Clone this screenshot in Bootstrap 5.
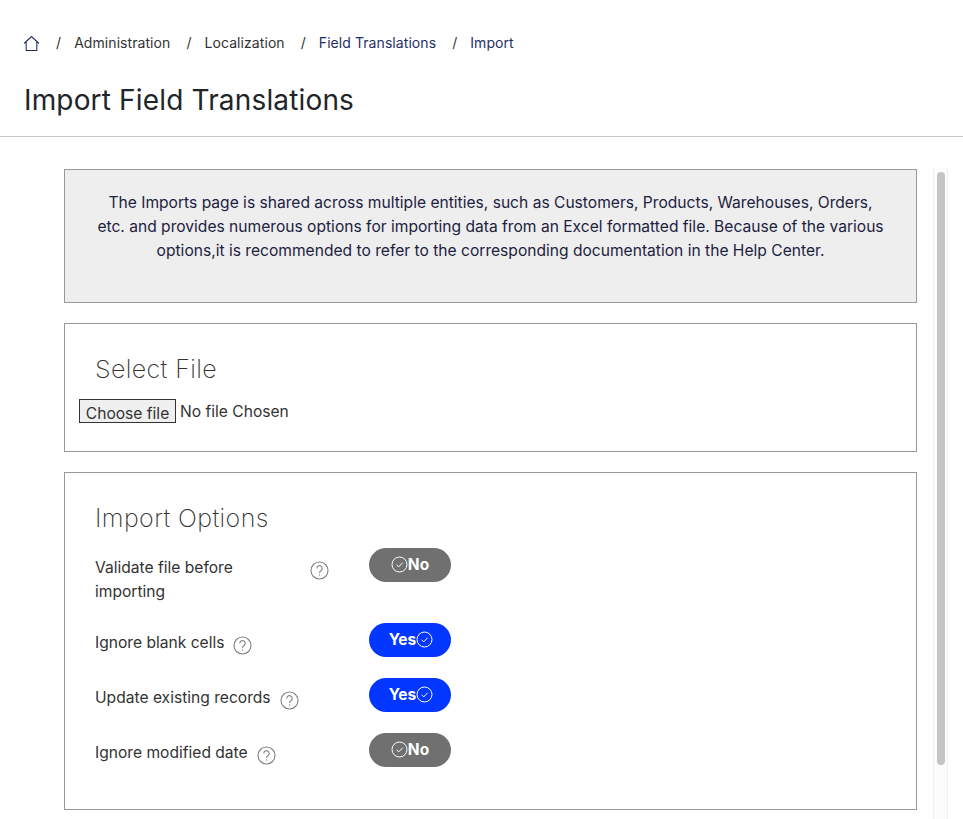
<!DOCTYPE html>
<html lang="en">
<head>
<meta charset="utf-8">
<title>Import Field Translations</title>
<link rel="stylesheet" href="https://cdn.jsdelivr.net/npm/bootstrap@5.3.0/dist/css/bootstrap.min.css">
<style>
html, body { height: 819px; overflow: hidden; }
body { font-family: Inter, "Liberation Sans", sans-serif; font-size: 15.6px; line-height: 24px; color: #333; background: #fff; }
.head-area { height: 137px; padding: 31px 24px 0; border-bottom: 1px solid #c8c8c8; }
.crumbs { height: 24px; font-size: 14px; letter-spacing: .07px; color: #333; }
.crumbs .sep { margin: 0 13px 0 16px; color: #333; }
.crumbs .nav-link-x { color: #1f2f66; text-decoration: none; }
.crumbs .home { display: block; width: 17px; height: 17px; margin-left: -1px; margin-right: 0; }
.page-heading { font-size: 28px; line-height: 36px; font-weight: 400; letter-spacing: .16px; color: #212529; margin: 27px 0 0; }
.body-area { height: 682px; }
.main-col { width: 933px; padding: 32px 16px 0 64px; }
.info-box { height: 134px; padding: 21px 24px 0; background: #eee; border: 1px solid #999; text-align: center; color: #1c2240; margin-bottom: 20px; }
.plain-box { border: 1px solid #999; margin-bottom: 20px; }
.file-box { height: 129px; padding: 26px 14px 0; }
.opts-box { height: 338px; padding: 26px 30px 0; }
.box-title { font-size: 25px; line-height: 38px; font-weight: 200; color: #333; margin: 0; letter-spacing: .4px; }
.file-box .box-title { padding-left: 16px; margin-bottom: 11px; }
.opts-box .box-title { margin-bottom: 11px; }
.file-btn { height: 24px; width: 97px; padding: 6px 0 0; border: 1px solid #333; background: #efefef; color: #333; font: 15.6px/16px Inter, "Liberation Sans", sans-serif; border-radius: 0; }
.file-note { margin-left: 4px; padding-top: 1px; }
.opt-line { min-height: 55px; }
.opt-label { width: 274px; padding: 8px 0 19px; }
.opt-wide { width: 206px; flex: none; }
.help-ic { width: 19px; height: 19px; flex: none; margin-top: 5px; margin-left: 9px; }
.toggle-pill { width: 82px; height: 34px; border-radius: 17px; color: #fff; font-weight: 700; font-size: 15.5px; line-height: 33px; }
.toggle-pill svg { width: 17px; height: 17px; margin-top: -1px; }
.t-on { background: #0336ff; padding-left: 2px; }
.t-off { background: #707070; }
.scroll-track { width: 15px; margin-top: 31px; height: 651px; padding: 4px 3px 0; background: #fcfcfc; border-left: 1px solid #f0f0f0; border-right: 1px solid #f0f0f0; }
.scroll-thumb { width: 8px; height: 593px; background: #c4c4c4; border-radius: 4px; }
</style>
</head>
<body>
<div class="head-area">
  <nav class="crumbs d-flex align-items-center">
    <svg class="home" viewBox="0 0 16 16" fill="none" stroke="#1f2f66" stroke-width="1"><path d="M1 8 8 1.5 15 8"/><path d="M3 6.2V14.5H13V6.2"/></svg>
    <span class="sep">/</span><span>Administration</span>
    <span class="sep">/</span><span>Localization</span>
    <span class="sep">/</span><a class="nav-link-x" href="#">Field Translations</a>
    <span class="sep">/</span><a class="nav-link-x" href="#">Import</a>
  </nav>
  <h1 class="page-heading">Import Field Translations</h1>
</div>
<div class="body-area d-flex">
  <div class="main-col">
    <div class="info-box">The Imports page is shared across multiple entities, such as Customers, Products, Warehouses, Orders,<br>etc. and provides numerous options for importing data from an Excel formatted file. Because of the various<br>options,it is recommended to refer to the corresponding documentation in the Help Center.</div>
    <div class="plain-box file-box">
      <h2 class="box-title">Select File</h2>
      <div class="d-flex align-items-start">
        <button type="button" class="file-btn">Choose file</button>
        <span class="file-note">No file Chosen</span>
      </div>
    </div>
    <div class="plain-box opts-box">
      <h2 class="box-title">Import Options</h2>

      <div class="opt-line d-flex">
        <div class="opt-label d-flex">
          <span class="opt-wide">Validate file before importing</span>
          <svg class="help-ic" viewBox="0 0 19 19" fill="none" stroke="#808080" stroke-width="1.1"><circle cx="9.5" cy="9.5" r="8.5"/><path d="M6.8 7.4a2.7 2.7 0 1 1 4.1 2.3c-1 .6-1.4 1.1-1.4 2.2"/><path d="M9.5 13.4v1.2"/></svg>
        </div>
        <div class="toggle-pill t-off d-flex justify-content-center">
          <svg viewBox="0 0 17 17" fill="none" stroke="#fff" class="align-self-center"><circle cx="8.5" cy="8.5" r="7.5"/><path d="M5.5 8.7l2.2 2.2 4-4.2"/></svg><span>No</span>
        </div>
      </div>

      <div class="opt-line d-flex">
        <div class="opt-label d-flex">
          <span>Ignore blank cells</span>
          <svg class="help-ic" viewBox="0 0 19 19" fill="none" stroke="#808080" stroke-width="1.1"><circle cx="9.5" cy="9.5" r="8.5"/><path d="M6.8 7.4a2.7 2.7 0 1 1 4.1 2.3c-1 .6-1.4 1.1-1.4 2.2"/><path d="M9.5 13.4v1.2"/></svg>
        </div>
        <div class="toggle-pill t-on d-flex justify-content-center">
          <span>Yes</span><svg viewBox="0 0 17 17" fill="none" stroke="#fff" class="align-self-center"><circle cx="8.5" cy="8.5" r="7.5"/><path d="M5.5 8.7l2.2 2.2 4-4.2"/></svg>
        </div>
      </div>

      <div class="opt-line d-flex">
        <div class="opt-label d-flex">
          <span>Update existing records</span>
          <svg class="help-ic" viewBox="0 0 19 19" fill="none" stroke="#808080" stroke-width="1.1"><circle cx="9.5" cy="9.5" r="8.5"/><path d="M6.8 7.4a2.7 2.7 0 1 1 4.1 2.3c-1 .6-1.4 1.1-1.4 2.2"/><path d="M9.5 13.4v1.2"/></svg>
        </div>
        <div class="toggle-pill t-on d-flex justify-content-center">
          <span>Yes</span><svg viewBox="0 0 17 17" fill="none" stroke="#fff" class="align-self-center"><circle cx="8.5" cy="8.5" r="7.5"/><path d="M5.5 8.7l2.2 2.2 4-4.2"/></svg>
        </div>
      </div>

      <div class="opt-line d-flex">
        <div class="opt-label d-flex">
          <span>Ignore modified date</span>
          <svg class="help-ic" viewBox="0 0 19 19" fill="none" stroke="#808080" stroke-width="1.1"><circle cx="9.5" cy="9.5" r="8.5"/><path d="M6.8 7.4a2.7 2.7 0 1 1 4.1 2.3c-1 .6-1.4 1.1-1.4 2.2"/><path d="M9.5 13.4v1.2"/></svg>
        </div>
        <div class="toggle-pill t-off d-flex justify-content-center">
          <svg viewBox="0 0 17 17" fill="none" stroke="#fff" class="align-self-center"><circle cx="8.5" cy="8.5" r="7.5"/><path d="M5.5 8.7l2.2 2.2 4-4.2"/></svg><span>No</span>
        </div>
      </div>
    </div>
  </div>
  <div class="scroll-track"><div class="scroll-thumb"></div></div>
</div>
<script src="https://cdn.jsdelivr.net/npm/bootstrap@5.3.0/dist/js/bootstrap.bundle.min.js"></script>
</body>
</html>
